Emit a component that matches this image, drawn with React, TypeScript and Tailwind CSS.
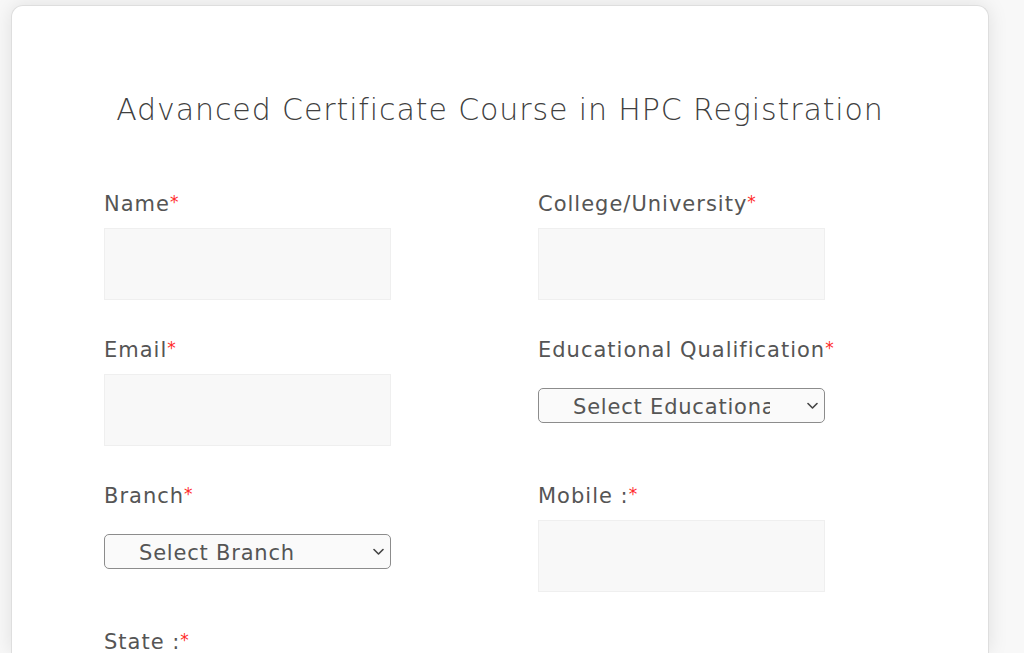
import React from 'react'

function Label({ text }: { text: string }) {
  return (
    <label className="block text-[21px] leading-[30px] tracking-[1px] text-[#555555]">
      {text}
      <span className="text-[#ff2b2b] text-[17px] tracking-normal align-[3px]">*</span>
    </label>
  )
}

function TextField({ label }: { label: string }) {
  return (
    <div>
      <Label text={label} />
      <input
        type="text"
        className="mt-[9px] block w-[287px] h-[72px] bg-[#f8f8f8] border border-[#efefef] outline-none"
      />
    </div>
  )
}

function SelectField({ label, placeholder }: { label: string; placeholder: string }) {
  return (
    <div>
      <Label text={label} />
      <div className="relative mt-[23px] w-[287px]">
        <select
          defaultValue=""
          className="block w-full h-[35px] appearance-none rounded-[5px] border border-[#8c8c8c] bg-[#fafafa] pl-[34px] pr-[54px] pt-[3px] text-[21px] tracking-[0.8px] text-[#555555] outline-none"
        >
          <option value="">{placeholder}</option>
        </select>
        <svg
          className="pointer-events-none absolute right-[7px] top-[14px]"
          width="11"
          height="8"
          viewBox="0 0 11 8"
          fill="none"
        >
          <path d="M1 1.5l4.5 4.5 4.5-4.5" stroke="#444" strokeWidth="1.6" strokeLinecap="round" strokeLinejoin="round" />
        </svg>
      </div>
    </div>
  )
}

export default function App() {
  return (
    <div className="min-h-screen bg-[#f8f8f8] pt-[5px] pl-[11px] overflow-hidden" style={{ fontFamily: '"DejaVu Sans", "Open Sans", sans-serif' }}>
      <div className="w-[978px] h-[648px] rounded-t-[12px] border border-b-0 border-[#dedede] bg-white shadow-[0_0_20px_rgba(0,0,0,0.1)]">
        <h1 className="pt-[84px] text-center text-[30px] leading-[40px] tracking-[0.9px] font-extralight text-[#404040]">
          Advanced Certificate Course in HPC Registration
        </h1>

        <div className="mt-[57px] pl-[92px] grid grid-cols-[434px_434px] auto-rows-[146px]">
          <TextField label="Name" />
          <TextField label="College/University" />
          <TextField label="Email" />
          <SelectField label="Educational Qualification" placeholder="Select Educational Qualification" />
          <SelectField label="Branch" placeholder="Select Branch" />
          <TextField label="Mobile :" />
          <div>
            <Label text="State :" />
          </div>
        </div>
      </div>
    </div>
  )
}
